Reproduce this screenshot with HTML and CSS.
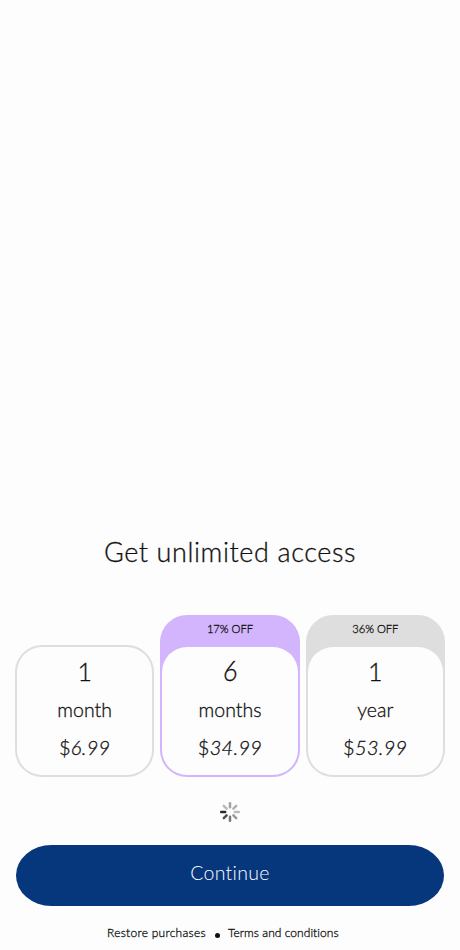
FILE: index.html
```html
<!DOCTYPE html>
<html lang="en">
<head>
<meta charset="utf-8">
<meta name="viewport" content="width=device-width, initial-scale=1">
<title>Get unlimited access</title>
<link rel="stylesheet" href="styles.css">
</head>
<body>
<main class="paywall">
  <h1 class="title">Get unlimited access</h1>
  <section class="plans">
    <button class="plan plan-plain">
      <span class="panel"><span class="count one">1</span><span class="unit">month</span><span class="price">$<i>6.99</i></span></span>
    </button>
    <button class="plan selected">
      <span class="offer">17% OFF</span>
      <span class="panel"><span class="count"><i>6</i></span><span class="unit">months</span><span class="price">$<i>34.99</i></span></span>
    </button>
    <button class="plan">
      <span class="offer">36% OFF</span>
      <span class="panel"><span class="count one">1</span><span class="unit">year</span><span class="price">$<i>53.99</i></span></span>
    </button>
  </section>
  <svg class="spinner" viewBox="-10 -10 20 20" fill="none" stroke-width="2.5" stroke-linecap="round">
    <path d="M0-4.8V-8.8" stroke="#a3a3a3"/>
    <path d="M3.4-3.4L6.2-6.2" stroke="#b0b0b0"/>
    <path d="M4.8 0H8.8" stroke="#bcbcbc"/>
    <path d="M3.4 3.4L6.2 6.2" stroke="#999"/>
    <path d="M0 4.8V8.8" stroke="#777"/>
    <path d="M-3.4 3.4L-6.2 6.2" stroke="#505050"/>
    <path d="M-4.8 0H-8.8" stroke="#292929"/>
    <path d="M-3.4-3.4L-6.2-6.2" stroke="#b8b8b8"/>
  </svg>
  <button class="continue"><span>Continue</span></button>
  <footer class="links"><a class="restore">Restore purchases</a><span class="dot"></span><a class="terms">Terms and conditions</a></footer>
</main>
</body>
</html>
```
FILE: styles.css
```css
* { box-sizing: border-box; }
body {
  margin: 0;
  background: #fdfdfd;
  color: #111;
  font-family: Papyrus, Lato, sans-serif;
  font-weight: 300;
  font-variant-ligatures: none;
  -webkit-text-stroke: .3px currentColor;
}
button {
  border: 0;
  padding: 0;
  background: none;
  color: inherit;
  font: inherit;
  font-variant-ligatures: none;
}
.paywall {
  height: 950px;
  padding: 0 15px;
  display: flex;
  flex-direction: column;
  overflow: hidden;
}
.title {
  margin: 532px 0 0;
  height: 40px;
  line-height: 40px;
  font-size: 27px;
  font-weight: 300;
  letter-spacing: .6px;
  text-align: center;
  white-space: nowrap;
}
.plans {
  margin-top: 43px;
  display: grid;
  grid-template-columns: repeat(3, 1fr);
  gap: 6px;
  align-items: end;
  height: 162px;
}
.plan {
  display: flex;
  flex-direction: column;
  height: 162px;
  padding: 0 2px 2px;
  border-radius: 27px;
  background: #dedede;
}
.plan-plain {
  height: 132px;
  padding-top: 2px;
}
.selected { background: #d2b5fc; }
.offer {
  height: 32px;
  padding-top: 5px;
  line-height: 18px;
  font-size: 11.2px;
  text-align: center;
}
.panel {
  flex: 1;
  display: flex;
  flex-direction: column;
  align-items: center;
  border-radius: 25px;
  background: #fdfdfd;
}
.count {
  height: 44px;
  line-height: 48px;
  font-size: 27px;
}
.one { font-size: 25px; }
.unit {
  height: 38px;
  line-height: 37px;
  font-size: 19.5px;
}
.price {
  height: 38px;
  line-height: 36px;
  font-size: 20px;
  letter-spacing: .3px;
}
.spinner {
  align-self: center;
  width: 20px;
  height: 20px;
  margin-top: 25px;
}
.continue {
  display: flex;
  justify-content: center;
  height: 61px;
  margin: 23px 1px 0;
  border-radius: 36px / 31px;
  background: #06367b;
  color: #fff;
  line-height: 55px;
  font-size: 19.5px;
  letter-spacing: .3px;
  -webkit-text-stroke: 0;
}
.links {
  display: flex;
  align-items: center;
  height: 18px;
  margin: 18px 0 0 92px;
  font-size: 12px;
  line-height: 18px;
  white-space: nowrap;
}
.restore {
  width: 99px;
  letter-spacing: .28px;
}
.terms {
  width: 116px;
  letter-spacing: .05px;
}
.dot {
  width: 5px;
  height: 5px;
  margin: 5px 8px 0 9px;
  border-radius: 50%;
  background: #111;
}
```
